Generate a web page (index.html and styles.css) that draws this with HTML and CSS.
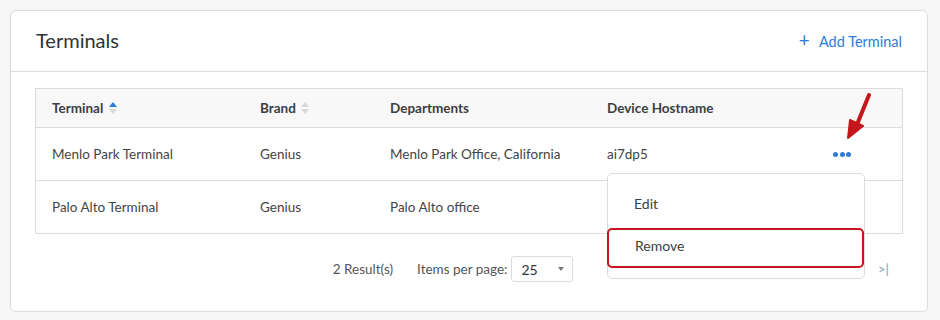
FILE: index.html
```html
<!DOCTYPE html>
<html lang="en">
  <head>
    <meta charset="UTF-8" />
    <meta name="viewport" content="width=device-width, initial-scale=1.0" />
    <title>Terminals</title>
    <link rel="stylesheet" href="styles.css">
  </head>
  <body>
    <div class="card">
      <div class="card-header">
        <h1>Terminals</h1>
        <a class="add-link" href="#"><span class="plus">+</span> Add Terminal</a>
      </div>
      <div class="card-body">
        <table class="grid">
          <thead>
            <tr>
              <th class="col-terminal">Terminal <span class="sort active"></span></th>
              <th class="col-brand">Brand <span class="sort"></span></th>
              <th class="col-dept">Departments</th>
              <th class="col-host">Device Hostname</th>
              <th class="col-actions"></th>
            </tr>
          </thead>
          <tbody>
            <tr>
              <td>Menlo Park Terminal</td>
              <td>Genius</td>
              <td>Menlo Park Office, California</td>
              <td>ai7dp5</td>
              <td class="actions"><span class="dots"><i></i><i></i><i></i></span></td>
            </tr>
            <tr>
              <td>Palo Alto Terminal</td>
              <td>Genius</td>
              <td>Palo Alto office</td>
              <td></td>
              <td class="actions"></td>
            </tr>
          </tbody>
        </table>

        <div class="pager">
          <span class="results">2 Result(s)</span>
          <span class="per-page">Items per page:</span>
          <div class="select">25 <span class="caret"></span></div>
          <div class="pages">
            <span class="nav">|&lt;</span>
            <span class="nav">&lt;</span>
            <span class="page">1</span>
            <span class="nav">&gt;</span>
            <span class="nav">&gt;|</span>
          </div>
        </div>
      </div>

      <div class="menu">
        <div class="menu-item">Edit</div>
        <div class="menu-item highlighted">Remove</div>
      </div>

      <svg class="pointer" width="30" height="50" viewBox="0 0 30 50">
        <line x1="25" y1="2" x2="12" y2="34" stroke="#c4161c" stroke-width="4" stroke-linecap="round" />
        <polygon points="4,45 6,27 19,33" fill="#c4161c" stroke="#c4161c" stroke-width="2" stroke-linejoin="round" />
      </svg>
    </div>
  </body>
</html>
```

FILE: styles.css
```css
body {
  font-family: Lato, 'Open Sans', sans-serif;
  margin: 0;
  padding: 10px 12px 0 10px;
  background-color: #f6f6f6;
  color: #3c4043;
}
.card {
  position: relative;
  background-color: white;
  border: 1px solid #dcdcdc;
  border-radius: 6px;
  height: 300px;
}
.card-header {
  display: flex;
  justify-content: space-between;
  align-items: center;
  height: 57px;
  padding: 0 25px 3px;
  border-bottom: 1px solid #dcdcdc;
}
h1 {
  margin: 0;
  font-size: 20px;
  font-weight: 400;
  color: #2f3337;
}
.add-link {
  color: #2f7bd6;
  text-decoration: none;
  font-size: 14.5px;
}
.plus {
  font-size: 19px;
  margin-right: 6px;
}
.card-body {
  padding: 16px 24px 0;
}
.grid {
  width: 100%;
  border-collapse: collapse;
  border: 1px solid #dcdcdc;
  font-size: 13.5px;
}
.grid th {
  background-color: #f8f8f8;
  text-align: left;
  font-weight: 700;
  color: #3a3e42;
  height: 38px;
  padding: 0 16px;
  border-bottom: 1px solid #dcdcdc;
}
.grid td {
  height: 52px;
  padding: 0 16px;
  border-bottom: 1px solid #dcdcdc;
  color: #444;
}
.col-terminal { width: 176px; }
.col-brand { width: 98px; }
.col-dept { width: 185px; }
.col-host { width: 194px; }
.sort {
  display: inline-block;
  position: relative;
  width: 8px;
  height: 12px;
  margin-left: 2px;
  vertical-align: -1px;
}
.sort::before, .sort::after {
  content: "";
  position: absolute;
  left: 0;
  border-left: 4.5px solid transparent;
  border-right: 4.5px solid transparent;
}
.sort::before {
  top: 0;
  border-bottom: 5px solid #d8d8d8;
}
.sort::after {
  bottom: 0;
  border-top: 5px solid #d8d8d8;
}
.sort.active::before {
  border-bottom-color: #2f7bd6;
}
.dots {
  display: inline-flex;
  gap: 1.5px;
  margin-left: 0;
  vertical-align: 2px;
}
.dots i {
  width: 5px;
  height: 5px;
  border-radius: 50%;
  background-color: #2f7bd6;
}
.pager {
  display: flex;
  justify-content: flex-end;
  align-items: center;
  margin-top: 22px;
  padding-right: 14px;
  font-size: 13.5px;
  color: #555;
}
.results {
  margin-right: 24px;
}
.per-page {
  margin-right: 4px;
}
.select {
  display: flex;
  align-items: center;
  justify-content: space-between;
  width: 46px;
  height: 24px;
  padding: 0 5px 0 9px;
  border: 1px solid #dcdcdc;
  border-radius: 3px;
  font-size: 14px;
  color: #333;
}
.caret {
  border-left: 3.5px solid transparent;
  border-right: 3.5px solid transparent;
  border-top: 4px solid #777;
  margin-right: 3px;
}
.pages {
  display: flex;
  align-items: center;
  gap: 50px;
  margin-left: 71px;
  color: #9fb0c3;
  font-weight: 700;
  font-size: 13px;
}
.menu {
  position: absolute;
  left: 596px;
  top: 162px;
  width: 256px;
  height: 104px;
  background-color: white;
  border: 1px solid #dcdcdc;
  border-radius: 5px;
  font-size: 14px;
  color: #3c4043;
}
.menu-item {
  height: 36px;
  line-height: 36px;
  padding-left: 26px;
  margin-top: 12px;
}
.menu-item.highlighted {
  margin-top: 6px;
  margin-left: -1px;
  border: 2px solid #c4161c;
  border-radius: 5px;
  line-height: 32px;
}
.pointer {
  position: absolute;
  left: 833px;
  top: 82px;
}
```
